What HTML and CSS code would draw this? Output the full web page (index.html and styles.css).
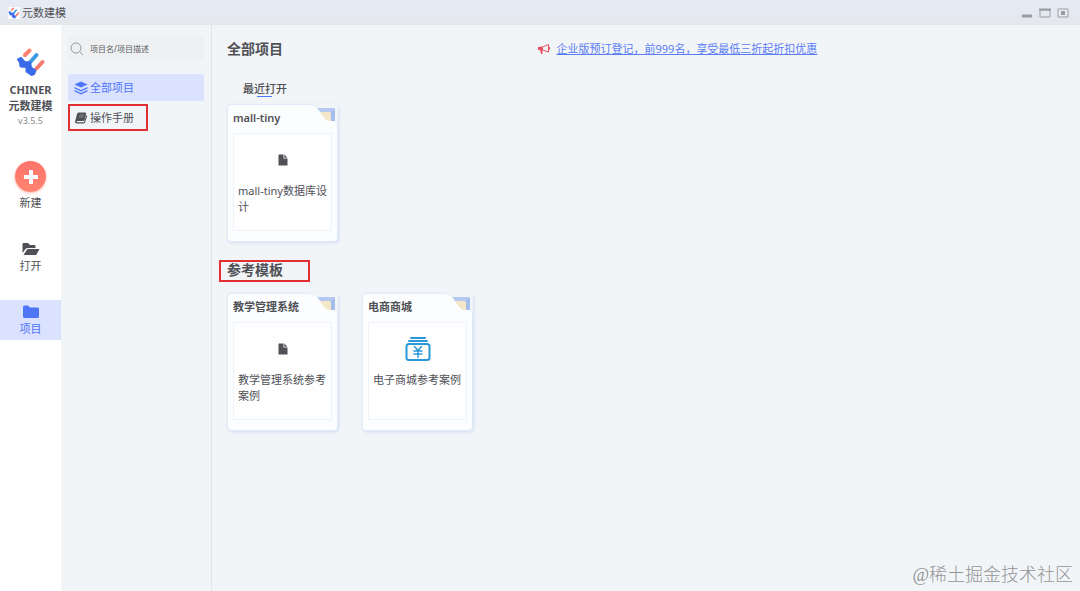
FILE: index.html
```html
<!DOCTYPE html>
<html lang="zh-CN">
  <head>
    <meta charset="UTF-8" />
    <meta name="viewport" content="width=device-width, initial-scale=1.0" />
    <title>元数建模</title>
    <link rel="stylesheet" href="styles.css" />
  </head>
  <body>
    <!-- shared icons -->
    <svg class="symbols" aria-hidden="true">
      <symbol id="logo" viewBox="0 0 30 30">
        <g fill="none" stroke-linecap="round">
          <path d="M9 8L13.500 3.500" stroke="#ff8172" stroke-width="4" />
          <path d="M20.500 21.500L26.500 15" stroke="#f57a70" stroke-width="4" />
          <path d="M13 16.500L20.500 8" stroke="#3f9be0" stroke-width="4" />
        </g>
        <path
          d="M2 12.500L5 11L8.500 15L14 15.500L15 20.500L19.500 23.500L18 27L15.500 28L10.500 24.500L10.500 20L4.500 19.500L4 15.500Z"
          fill="#3a6be8" stroke="#3a6be8" stroke-width="2" stroke-linejoin="round"
        />
      </symbol>
      <symbol id="file" viewBox="0 0 10 12">
        <path d="M1 0.500H5.500V4.500H9.500V11.500H0.500V1Z M6.300 0.600L9.400 3.700H6.300Z" fill="#505156" />
      </symbol>
      <symbol id="corner" viewBox="0 0 30 22">
        <path d="M0 0H30V22H0Z" fill="#f2f5f7" />
        <path d="M8 4H26Q27 4 27 5V17H8Z" fill="#b4c8f1" />
        <path d="M8 8H21Q23 8 23 10V17H8Z" fill="#f4e7c9" />
        <path d="M23 8V17H27V5Z" fill="#a5bdeb" />
        <path d="M0 0C8 0 9 4 12 8C16 14 18 17 22 17H27Q30 17 30 20V22H0Z" fill="#fbfdff" />
        <path d="M0 0.500C8 0.500 9 4 12 8M27 17.500Q29.500 17.500 29.500 20V22" fill="none" stroke="#e1eaf8" />
      </symbol>
    </svg>

    <header class="titlebar">
      <svg class="titlebar-logo"><use href="#logo" /></svg>
      <span>元数建模</span>
      <div class="window-buttons">
        <button type="button" aria-label="最小化">
          <svg viewBox="0 0 12 10"><path d="M1 8H11" stroke="#999da3" stroke-width="3" /></svg>
        </button>
        <button type="button" aria-label="最大化">
          <svg viewBox="0 0 12 10"><path d="M1 2H11V9H1Z" fill="none" stroke="#999da3" /><path d="M0 1.500H12" stroke="#999da3" stroke-width="2" /></svg>
        </button>
        <button type="button" aria-label="关闭">
          <svg viewBox="0 0 12 10"><path d="M1 1H11V9H1Z" fill="#e9ebee" stroke="#999da3" /><path d="M4 3H8V7H4Z" fill="#999da3" /></svg>
        </button>
      </div>
    </header>

    <div class="app">
      <nav class="rail">
        <div class="brand">
          <svg class="brand-logo"><use href="#logo" /></svg>
          <strong>CHINER</strong>
          <strong>元数建模</strong>
          <small>v3.5.5</small>
        </div>
        <button type="button" class="rail-button create">
          <span class="create-icon">
            <svg viewBox="0 0 14 14"><path d="M7 0V14M0 7H14" stroke="#fff" stroke-width="4" /></svg>
          </span>
          新建
        </button>
        <button type="button" class="rail-button open">
          <svg class="rail-icon" viewBox="0 0 18 14">
            <path d="M0.500 11V2Q0.500 1 1.500 1H6L8 3H12.500Q13.500 3 13.500 4V6H6Q4.500 6 3.500 7Z" fill="#505156" />
            <path d="M6 7H17.500L14.500 12.500Q14 13 13 13H1.500L5 7.500Z" fill="#505156" />
          </svg>
          打开
        </button>
        <button type="button" class="rail-button active">
          <svg class="rail-icon" viewBox="0 0 18 14">
            <path d="M1 2Q1 0.500 2.500 0.500H6L8 2.500H15.500Q17 2.500 17 4V11.500Q17 13 15.500 13H2.500Q1 13 1 11.500Z" fill="#4e75f5" />
          </svg>
          项目
        </button>
      </nav>

      <aside class="sidebar">
        <label class="search">
          <svg viewBox="0 0 14 14"><circle cx="6" cy="6" r="5" fill="none" stroke="#96999d" /><path d="M10 10L13 13" stroke="#96999d" /></svg>
          <input type="text" aria-label="搜索项目" placeholder="项目名/项目描述" />
        </label>
        <button type="button" class="menu-item selected">
          <svg viewBox="0 0 14 14">
            <path d="M7 0.500L13.500 3.500L7 6.500L0.500 3.500Z" fill="#4e75f5" />
            <path d="M0.500 6L7 9L13.500 6V7.500L7 10.500L0.500 7.500Z M0.500 9L7 12L13.500 9V10.500L7 13.500L0.500 10.500Z" fill="#4e75f5" />
          </svg>
          全部项目
        </button>
        <button type="button" class="menu-item marked">
          <svg viewBox="0 0 14 14">
            <path d="M4.500 1.500H11Q12.500 1.500 12 3L10.500 9Q10.200 10 9 10H3Q2 11.200 3.200 11.200H10L12.300 4Q13.300 4.500 13 5.500L11 11.500Q10.500 12.500 9.500 12.500H3Q0.700 12.500 1.200 10L3 3Q3.500 1.500 4.500 1.500Z" fill="#505156" />
            <path d="M5.500 4H10M5 6H9.500" stroke="#a5a6a9" stroke-width="0.700" />
          </svg>
          操作手册
        </button>
      </aside>

      <main class="content">
        <div class="content-head">
          <h1>全部项目</h1>
          <p class="notice">
            <svg viewBox="0 0 14 12">
              <path d="M1 4L6 3.500V7.500L2 7.300Q1 7.300 1 6Z M3 7H5.500V11H4Z" fill="#e8505f" />
              <path d="M6 3.800L11.500 1.500V9L6 7.200M12.500 4V6.500" fill="none" stroke="#e8505f" />
            </svg>
            <a href="#">企业版预订登记，前999名，享受最低三折起折扣优惠</a>
          </p>
        </div>

        <h2 class="tab">最近打开</h2>
        <div class="cards">
          <article class="card">
            <svg class="card-corner"><use href="#corner" /></svg>
            <h3>mall-tiny</h3>
            <div class="card-body">
              <svg class="file-icon"><use href="#file" /></svg>
              <p>mall-tiny数据库设计</p>
            </div>
          </article>
        </div>

        <h2 class="section-title">参考模板</h2>
        <div class="cards">
          <article class="card">
            <svg class="card-corner"><use href="#corner" /></svg>
            <h3>教学管理系统</h3>
            <div class="card-body">
              <svg class="file-icon"><use href="#file" /></svg>
              <p>教学管理系统参考案例</p>
            </div>
          </article>
          <article class="card">
            <svg class="card-corner"><use href="#corner" /></svg>
            <h3>电商商城</h3>
            <div class="card-body">
              <svg class="shop-icon" viewBox="0 0 26 24">
                <g fill="none" stroke="#2997d8" stroke-width="2" stroke-linecap="round">
                  <path d="M6 1H20M4 4H22" />
                  <rect x="1.500" y="7" width="23" height="16" rx="2.500" />
                  <path d="M9.500 9.500L13 13.500L16.500 9.500M13 13.500V20.500M9 14H17M9 17H17" stroke-width="1.400" />
                </g>
              </svg>
              <p>电子商城参考案例</p>
            </div>
          </article>
        </div>
      </main>
    </div>
    <div class="watermark">@稀土掘金技术社区</div>
  </body>
</html>
```
FILE: styles.css
```css
* {
  box-sizing: border-box;
}
body {
  margin: 0;
  min-height: 100vh;
  display: flex;
  flex-direction: column;
  position: relative;
  font-family: "Noto Sans", "Noto Sans CJK SC", sans-serif;
  font-size: 11px;
  line-height: 16px;
  color: #505156;
  background-color: #f2f5f7;
}
h1,
h2,
h3,
p {
  margin: 0;
}
button {
  padding: 0;
  border: none;
  background: none;
  font: inherit;
  color: inherit;
  cursor: pointer;
}
svg {
  display: block;
  flex: none;
}
.symbols {
  position: absolute;
  width: 0;
  height: 0;
}

/* title bar */
.titlebar {
  display: flex;
  align-items: center;
  height: 25px;
  padding: 0 11px 0 8px;
  gap: 2px;
  background: linear-gradient(#e6ebf6, #e4e7eb);
}
.titlebar-logo {
  width: 12px;
  height: 12px;
  background-color: #fbfcff;
}
.window-buttons {
  display: flex;
  gap: 6px;
  margin-left: auto;
}
.window-buttons svg {
  width: 12px;
  height: 10px;
}

/* left rail */
.app {
  display: flex;
  flex: 1;
}
.rail {
  width: 61px;
  display: flex;
  flex-direction: column;
  background-color: #fff;
}
.brand {
  display: flex;
  flex-direction: column;
  align-items: center;
  padding-top: 22px;
}
.brand-logo {
  width: 30px;
  height: 30px;
  margin-bottom: 5px;
}
.brand small {
  font-size: 9px;
  line-height: 14px;
  color: #85878b;
}
.rail-button {
  display: flex;
  flex-direction: column;
  align-items: center;
  height: 40px;
}
.rail-icon {
  width: 18px;
  height: 14px;
  margin: 5px 0 2px;
}
.create {
  height: 52px;
  margin-top: 33px;
}
.create-icon {
  display: grid;
  place-items: center;
  width: 31px;
  height: 31px;
  margin-bottom: 3px;
  border-radius: 50%;
  background: linear-gradient(#ff736c, #ff846f);
  box-shadow: 0 1px 3px rgba(255, 120, 105, 0.5);
}
.create-icon svg {
  width: 14px;
  height: 14px;
}
.open {
  margin: 24px 0 23px;
}
.active {
  color: #4e75f5;
  background-color: #dbe2ff;
}

/* project menu */
.sidebar {
  width: 151px;
  padding: 12px 7px;
  display: flex;
  flex-direction: column;
  align-items: flex-start;
  border-right: 1px solid #e0e5ec;
}
.search {
  display: flex;
  align-items: center;
  width: 100%;
  height: 23px;
  padding-left: 2px;
  gap: 6px;
  margin-bottom: 14px;
  border-radius: 4px;
  background-color: #eef0f1;
}
.search svg {
  width: 14px;
  height: 14px;
}
.search input {
  flex: 1;
  min-width: 0;
  padding: 0;
  border: none;
  outline: none;
  background: none;
  font-family: inherit;
  font-size: 8px;
}
.search input::placeholder {
  color: #5d5f63;
  opacity: 1;
}
.menu-item {
  display: flex;
  align-items: center;
  gap: 2px;
  height: 27px;
  padding: 0 6px;
}
.menu-item svg {
  width: 14px;
  height: 14px;
}
.selected {
  width: 100%;
  margin-bottom: 3px;
  border-radius: 2px;
  color: #4e75f5;
  background-color: #dbe2ff;
}
.marked {
  padding: 0 12px 0 4px;
  border: 2px solid #e22f33;
}

/* main area */
.content {
  flex: 1;
  padding: 14px 15px;
}
.content-head {
  display: grid;
  grid-template-columns: 5fr auto 4fr;
  align-items: center;
  margin-bottom: 22px;
}
h1,
.section-title {
  font-size: 14px;
  line-height: 20px;
}
.notice {
  display: flex;
  align-items: center;
  gap: 6px;
}
.notice svg {
  width: 14px;
  height: 12px;
}
.notice a {
  color: #5b7cf5;
}
.tab {
  position: relative;
  display: table;
  margin: 0 0 7px 16px;
  font-size: 11px;
  font-weight: 500;
}
.tab::after {
  content: "";
  position: absolute;
  left: 14px;
  bottom: 0;
  width: 15px;
  height: 1px;
  background-color: #4e75f5;
}
.section-title {
  width: 91px;
  height: 22px;
  margin: 18px 0 11px -8px;
  padding-left: 6px;
  line-height: 16px;
  border: 2px solid #e22f33;
}
.cards {
  display: flex;
  flex-wrap: wrap;
  gap: 24px;
}
.card {
  position: relative;
  width: 111px;
  height: 138px;
  padding: 5px 5px 10px;
  display: flex;
  flex-direction: column;
  gap: 7px;
  border: 1px solid #e1eaf8;
  border-radius: 4px;
  background-color: #fbfdff;
  box-shadow: 1px 1px 3px #cfdef5;
}
.card-corner {
  position: absolute;
  top: -1px;
  right: -1px;
  width: 30px;
  height: 22px;
}
.card h3 {
  font-size: 11px;
  line-height: 16px;
  font-weight: 600;
}
.card-body {
  flex: 1;
  display: flex;
  flex-direction: column;
  align-items: center;
  padding: 12px 4px 0;
  border: 1px solid #eef3fb;
  background-color: #fefeff;
}
.card-body p {
  width: 100%;
}
.file-icon {
  width: 10px;
  height: 12px;
  margin: 8px 0 17px;
}
.shop-icon {
  width: 26px;
  height: 24px;
  margin: 2px 0 11px;
}
.watermark {
  position: absolute;
  right: 7px;
  bottom: 4px;
  font-family: "Liberation Serif", "Noto Sans CJK SC", serif;
  font-size: 18px;
  font-weight: 300;
  line-height: 24px;
  color: #929497;
}
```
